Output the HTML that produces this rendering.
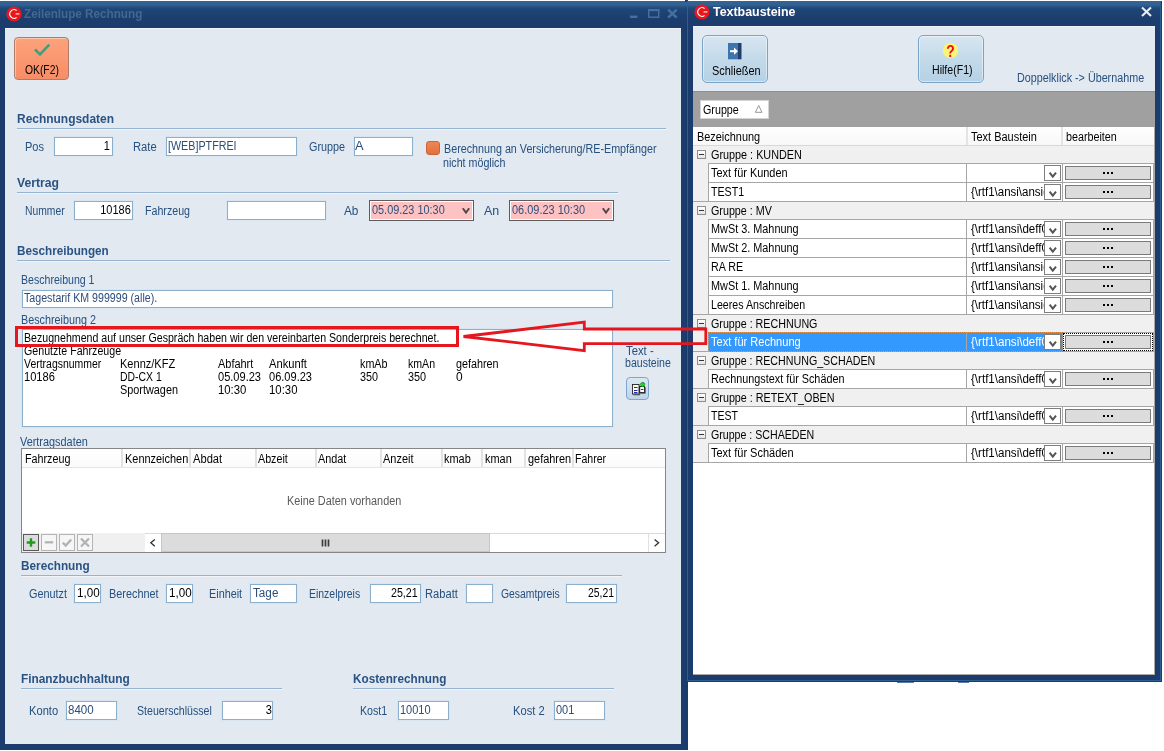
<!DOCTYPE html>
<html lang="de"><head><meta charset="utf-8"><title>Zeilenlupe Rechnung</title>
<style>
html,body{margin:0;padding:0}
body{width:1164px;height:751px;position:relative;overflow:hidden;background:#fff;font-family:"Liberation Sans",sans-serif;font-size:11px;line-height:13px}
#root{position:absolute;left:0;top:0;width:1164px;height:751px;will-change:transform}
.a{position:absolute}
.t{position:absolute;white-space:pre;line-height:14px;font-size:12.5px;display:inline-block;transform-origin:0 0}
.b{font-weight:bold;font-size:12px;line-height:14px}
.r{transform-origin:100% 0}
.inp{border:1px solid #8bb0cd;background:#fff;box-sizing:border-box;box-shadow:0 0 0 1px rgba(214,227,239,.7)}
.clip{overflow:hidden}
</style></head>
<body>
<div id="root">
<div class="a " style="left:0px;top:1px;width:688px;height:749px;background:#1b3c6c"></div>
<div class="a " style="left:0px;top:1px;width:688px;height:22px;background:linear-gradient(#346497 0,#316192 4px,#275183 6px,#1f4677 8px,#1d4172 13px,#1b3c6c 22px)"></div>
<div class="a " style="left:5px;top:28px;width:676px;height:716px;background:#e2e9f1;border-top:1px solid #f1f5f9;box-sizing:border-box"></div>
<div class="a " style="left:687px;top:1px;width:475px;height:681px;background:#1b3c6c"></div>
<div class="a " style="left:685px;top:0px;width:3px;height:2px;background:#1b3c6c"></div>
<div class="a " style="left:687px;top:1px;width:475px;height:22px;background:linear-gradient(#346497 0,#316192 4px,#275183 6px,#1f4677 8px,#1d4172 13px,#1b3c6c 22px)"></div>
<div class="a " style="left:686px;top:24px;width:1px;height:726px;background:#16386a"></div>
<div class="a " style="left:687px;top:3px;width:1px;height:678px;background:#2e5e92"></div>
<div class="a " style="left:1160px;top:3px;width:1px;height:678px;background:#2e5e92"></div>
<div class="a " style="left:687px;top:680px;width:474px;height:1px;background:#2e5e92"></div>
<div class="a " style="left:1161px;top:1px;width:1px;height:681px;background:#153d72"></div>
<div class="a " style="left:686px;top:681px;width:476px;height:1px;background:#153d72"></div>
<div class="a " style="left:693px;top:26px;width:462px;height:649px;background:#fff"></div>
<div class="a " style="left:693px;top:26px;width:462px;height:65px;background:#e2e9f1;border-top:1px solid #edf2f7;box-sizing:border-box"></div>
<div class="a " style="left:693px;top:91px;width:462px;height:36px;background:#a0a0a0;border-top:1px solid #8c9199;box-sizing:border-box"></div>
<svg class="a" style="left:4.5px;top:4.5px" width="18" height="18" viewBox="-9 -9 18 18"><circle r="7.6" fill="#e9171c"/><path d="M2.6,-3.5A4.3,4.3 0 1 0 2.6,3.5" fill="none" stroke="#fff" stroke-width="1.15"/><path d="M1.6,-0.1H5.4" stroke="#fff" stroke-width="1.1"/></svg>
<svg class="a" style="left:692.5px;top:2.8000000000000007px" width="18" height="18" viewBox="-9 -9 18 18"><circle r="7.6" fill="#e9171c"/><path d="M2.6,-3.5A4.3,4.3 0 1 0 2.6,3.5" fill="none" stroke="#fff" stroke-width="1.15"/><path d="M1.6,-0.1H5.4" stroke="#fff" stroke-width="1.1"/></svg>
<span class="t b" style="top:7px;color:#44688f;left:24.4px;transform:scaleX(0.975);">Zeilenlupe Rechnung</span>
<svg class="a" style="left:625px;top:5px" width="58" height="18" viewBox="625 5 58 18"><path d="M630,16.8h7.4" stroke="#4470a0" stroke-width="2.4"/><rect x="648.7" y="10.4" width="10" height="6.8" fill="none" stroke="#4470a0" stroke-width="1.5"/><path d="M648,10h11.4" stroke="#4470a0" stroke-width="2"/><path d="M668.2,9.6l8.4,8M676.6,9.6l-8.4,8" stroke="#4470a0" stroke-width="2.6"/></svg>
<span class="t b" style="top:5px;color:#fff;left:713.0px;transform:scaleX(1.034);">Textbausteine</span>
<svg class="a" style="left:1138px;top:4px" width="18" height="16" viewBox="1138 4 18 16"><path d="M1142,7.5l9,8.5M1151,7.5l-9,8.5" stroke="#e9eef5" stroke-width="2.1"/></svg>
<div class="a " style="left:14px;top:37px;width:55px;height:43px;border:1px solid #ad7d6a;border-radius:4px;background:linear-gradient(#fca27c,#fa9871 50%,#f78d66);box-sizing:border-box;box-shadow:inset 1px 1px 0 rgba(255,255,255,.4)"></div>
<svg class="a" style="left:30px;top:40px" width="24" height="20" viewBox="30 40 24 20"><path d="M35,49.5l5,5L49.3,44.6" fill="none" stroke="#4a9a7c" stroke-width="2.6"/></svg>
<span class="t" style="top:63px;color:#000;left:25.1px;transform:scaleX(0.826);">OK(F2)</span>
<span class="t b" style="top:112px;color:#2a5384;left:16.7px;transform:scaleX(0.996);">Rechnungsdaten</span>
<div class="a " style="left:17px;top:128px;width:649px;height:1px;background:#96b4d1"></div>
<div class="a " style="left:17px;top:129px;width:649px;height:1px;background:#f1f5f9"></div>
<span class="t b" style="top:176px;color:#2a5384;left:16.7px;transform:scaleX(1.016);">Vertrag</span>
<div class="a " style="left:17px;top:192px;width:601px;height:1px;background:#96b4d1"></div>
<div class="a " style="left:17px;top:193px;width:601px;height:1px;background:#f1f5f9"></div>
<span class="t b" style="top:244px;color:#2a5384;left:16.7px;transform:scaleX(0.976);">Beschreibungen</span>
<div class="a " style="left:17px;top:260px;width:653px;height:1px;background:#96b4d1"></div>
<div class="a " style="left:17px;top:261px;width:653px;height:1px;background:#f1f5f9"></div>
<span class="t b" style="top:559px;color:#2a5384;left:20.9px;transform:scaleX(0.981);">Berechnung</span>
<div class="a " style="left:21px;top:575px;width:601px;height:1px;background:#96b4d1"></div>
<div class="a " style="left:21px;top:576px;width:601px;height:1px;background:#f1f5f9"></div>
<span class="t b" style="top:672px;color:#2a5384;left:20.5px;transform:scaleX(0.988);">Finanzbuchhaltung</span>
<div class="a " style="left:21px;top:688px;width:261px;height:1px;background:#96b4d1"></div>
<div class="a " style="left:21px;top:689px;width:261px;height:1px;background:#f1f5f9"></div>
<span class="t b" style="top:672px;color:#2a5384;left:352.5px;transform:scaleX(0.979);">Kostenrechnung</span>
<div class="a " style="left:353px;top:688px;width:261px;height:1px;background:#96b4d1"></div>
<div class="a " style="left:353px;top:689px;width:261px;height:1px;background:#f1f5f9"></div>
<span class="t" style="top:140px;color:#25507f;left:24.9px;transform:scaleX(0.883);">Pos</span>
<div class="a inp" style="left:54px;top:137px;width:59px;height:19px;"></div>
<span class="t r" style="top:139px;color:#000;right:1054.4px;transform:scaleX(0.880);">1</span>
<span class="t" style="top:140px;color:#25507f;left:132.9px;transform:scaleX(0.899);">Rate</span>
<div class="a inp" style="left:166px;top:137px;width:131px;height:19px;"></div>
<span class="t" style="top:139px;color:#2d4d78;left:168.0px;transform:scaleX(0.859);">[WEB]PTFREI</span>
<span class="t" style="top:140px;color:#25507f;left:308.6px;transform:scaleX(0.863);">Gruppe</span>
<div class="a inp" style="left:354px;top:137px;width:59px;height:19px;"></div>
<span class="t" style="top:139px;color:#2d4d78;left:355.2px;transform:scaleX(1.023);">A</span>
<div class="a " style="left:426px;top:141px;width:14px;height:14px;border:1px solid #c8663a;border-radius:3px;background:linear-gradient(#ee8656,#e46f3c);box-sizing:border-box"></div>
<span class="t" style="top:142px;color:#25507f;left:444.0px;transform:scaleX(0.859);">Berechnung an Versicherung/RE-Empfänger</span>
<span class="t" style="top:156px;color:#25507f;left:443.2px;transform:scaleX(0.855);">nicht möglich</span>
<span class="t" style="top:204px;color:#25507f;left:24.9px;transform:scaleX(0.827);">Nummer</span>
<div class="a inp" style="left:74px;top:201px;width:59px;height:19px;"></div>
<span class="t r" style="top:203px;color:#000;right:1033.1px;transform:scaleX(0.880);">10186</span>
<span class="t" style="top:204px;color:#25507f;left:144.9px;transform:scaleX(0.852);">Fahrzeug</span>
<div class="a inp" style="left:227px;top:201px;width:99px;height:19px;"></div>
<span class="t" style="top:204px;color:#25507f;left:344.2px;transform:scaleX(0.942);">Ab</span>
<div class="a " style="left:369px;top:200px;width:105px;height:21px;border:1px solid #5c5c5c;background:#ffc2c2;box-sizing:border-box;box-shadow:inset 0 0 0 1px #fff"></div>
<span class="t" style="top:203px;color:#2e5180;left:371.9px;transform:scaleX(0.872);">05.09.23 10:30</span>
<svg class="a" style="left:459.5px;top:205px" width="12" height="12" viewBox="0 0 12 12"><path d="M2.8,3.3l3.2,4.3l3.2,-4.3" fill="none" stroke="#4a4a4a" stroke-width="1.9"/></svg>
<span class="t" style="top:204px;color:#25507f;left:483.9px;transform:scaleX(0.993);">An</span>
<div class="a " style="left:509px;top:200px;width:105px;height:21px;border:1px solid #5c5c5c;background:#ffc2c2;box-sizing:border-box;box-shadow:inset 0 0 0 1px #fff"></div>
<span class="t" style="top:203px;color:#2e5180;left:511.5px;transform:scaleX(0.876);">06.09.23 10:30</span>
<svg class="a" style="left:599.5px;top:205px" width="12" height="12" viewBox="0 0 12 12"><path d="M2.8,3.3l3.2,4.3l3.2,-4.3" fill="none" stroke="#4a4a4a" stroke-width="1.9"/></svg>
<span class="t" style="top:273px;color:#25507f;left:20.9px;transform:scaleX(0.846);">Beschreibung 1</span>
<div class="a inp" style="left:22px;top:290px;width:591px;height:18px;"></div>
<span class="t" style="top:291px;color:#2d4d78;left:24.0px;transform:scaleX(0.852);">Tagestarif KM 999999 (alle).</span>
<span class="t" style="top:313px;color:#25507f;left:20.9px;transform:scaleX(0.863);">Beschreibung 2</span>
<div class="a inp" style="left:22px;top:329px;width:591px;height:98px;"></div>
<span class="t" style="top:331px;color:#000;left:24.0px;transform:scaleX(0.849);">Bezugnehmend auf unser Gespräch haben wir den vereinbarten Sonderpreis berechnet.</span>
<span class="t" style="top:344px;color:#000;left:23.5px;transform:scaleX(0.852);">Genutzte Fahrzeuge</span>
<span class="t" style="top:357px;color:#000;left:23.5px;transform:scaleX(0.836);">Vertragsnummer</span>
<span class="t" style="top:357px;color:#000;left:119.6px;transform:scaleX(0.883);">Kennz/KFZ</span>
<span class="t" style="top:357px;color:#000;left:218.1px;transform:scaleX(0.876);">Abfahrt</span>
<span class="t" style="top:357px;color:#000;left:269.1px;transform:scaleX(0.895);">Ankunft</span>
<span class="t" style="top:357px;color:#000;left:359.6px;transform:scaleX(0.860);">kmAb</span>
<span class="t" style="top:357px;color:#000;left:408.3px;transform:scaleX(0.847);">kmAn</span>
<span class="t" style="top:357px;color:#000;left:456.0px;transform:scaleX(0.863);">gefahren</span>
<span class="t" style="top:370px;color:#000;left:23.5px;transform:scaleX(0.890);">10186</span>
<span class="t" style="top:370px;color:#000;left:119.6px;transform:scaleX(0.835);">DD-CX 1</span>
<span class="t" style="top:370px;color:#000;left:218.1px;transform:scaleX(0.884);">05.09.23</span>
<span class="t" style="top:370px;color:#000;left:269.1px;transform:scaleX(0.884);">06.09.23</span>
<span class="t" style="top:370px;color:#000;left:359.6px;transform:scaleX(0.863);">350</span>
<span class="t" style="top:370px;color:#000;left:408.3px;transform:scaleX(0.868);">350</span>
<span class="t" style="top:370px;color:#000;left:455.9px;transform:scaleX(0.954);">0</span>
<span class="t" style="top:383px;color:#000;left:119.6px;transform:scaleX(0.869);">Sportwagen</span>
<span class="t" style="top:383px;color:#000;left:218.1px;transform:scaleX(0.907);">10:30</span>
<span class="t" style="top:383px;color:#000;left:269.1px;transform:scaleX(0.910);">10:30</span>
<span class="t" style="top:344px;color:#25507f;left:625.6px;transform:scaleX(0.905);">Text -</span>
<span class="t" style="top:356px;color:#25507f;left:625.3px;transform:scaleX(0.846);">bausteine</span>
<div class="a " style="left:626px;top:377px;width:23px;height:23px;border:1px solid #7fa5cf;border-radius:4px;background:linear-gradient(#dbe7f3,#bfd4e9);box-sizing:border-box"></div>
<svg class="a" style="left:626px;top:377px" width="23" height="23" viewBox="626 377 23 23"><rect x="639.5" y="386.5" width="5" height="6" fill="#fff" stroke="#222" stroke-width=".9"/><path d="M640.5,393.3h4.8v-6" fill="none" stroke="#222" stroke-width=".7"/><path d="M641,389.5h2.5" stroke="#2233aa" stroke-width="1"/><rect x="632.5" y="384.5" width="6.5" height="9.5" fill="#fff" stroke="#222" stroke-width=".9"/><path d="M633.5,394.8h6.3v-9" fill="none" stroke="#222" stroke-width=".7"/><path d="M634,387.5h3.5M634,390.5h3.5M634,392.6h3.5" stroke="#1a2bb0" stroke-width="1.2"/><path d="M633.5,386h1M637,389h1M633.5,391.6h1" stroke="#e8e000" stroke-width="1"/><path d="M642.7,382v4.8M640.3,384.4h4.8" stroke="#0a7a0a" stroke-width="2.2"/><path d="M642.7,382.4v4M640.7,384.4h4" stroke="#22dd22" stroke-width="1.4"/></svg>
<span class="t" style="top:435px;color:#25507f;left:20.1px;transform:scaleX(0.871);">Vertragsdaten</span>
<div class="a " style="left:21px;top:448px;width:645px;height:105px;border:1px solid #868686;background:#fff;box-sizing:border-box"></div>
<div class="a " style="left:22px;top:449px;width:643px;height:19px;background:linear-gradient(#fff,#fbfbfb);border-bottom:1px solid #e4e4e4;box-sizing:border-box"></div>
<div class="a " style="left:121px;top:449px;width:2px;height:18px;background:#e2e2e2"></div>
<div class="a " style="left:189px;top:449px;width:2px;height:18px;background:#e2e2e2"></div>
<div class="a " style="left:255px;top:449px;width:2px;height:18px;background:#e2e2e2"></div>
<div class="a " style="left:315px;top:449px;width:2px;height:18px;background:#e2e2e2"></div>
<div class="a " style="left:380px;top:449px;width:2px;height:18px;background:#e2e2e2"></div>
<div class="a " style="left:441px;top:449px;width:2px;height:18px;background:#e2e2e2"></div>
<div class="a " style="left:481px;top:449px;width:2px;height:18px;background:#e2e2e2"></div>
<div class="a " style="left:524px;top:449px;width:2px;height:18px;background:#e2e2e2"></div>
<div class="a " style="left:572px;top:449px;width:2px;height:18px;background:#e2e2e2"></div>
<span class="t" style="top:452px;color:#000;left:24.5px;transform:scaleX(0.859);">Fahrzeug</span>
<span class="t" style="top:452px;color:#000;left:124.7px;transform:scaleX(0.875);">Kennzeichen</span>
<span class="t" style="top:452px;color:#000;left:193.3px;transform:scaleX(0.892);">Abdat</span>
<span class="t" style="top:452px;color:#000;left:258.3px;transform:scaleX(0.857);">Abzeit</span>
<span class="t" style="top:452px;color:#000;left:318.3px;transform:scaleX(0.866);">Andat</span>
<span class="t" style="top:452px;color:#000;left:383.1px;transform:scaleX(0.878);">Anzeit</span>
<span class="t" style="top:452px;color:#000;left:443.9px;transform:scaleX(0.874);">kmab</span>
<span class="t" style="top:452px;color:#000;left:484.8px;transform:scaleX(0.874);">kman</span>
<span class="t" style="top:452px;color:#000;left:527.7px;transform:scaleX(0.873);">gefahren</span>
<span class="t" style="top:452px;color:#000;left:575.3px;transform:scaleX(0.844);">Fahrer</span>
<span class="t" style="top:494px;color:#5a5a5a;left:286.8px;transform:scaleX(0.870);">Keine Daten vorhanden</span>
<div class="a " style="left:22px;top:533px;width:123px;height:19px;background:#f0f0f0"></div>
<div class="a " style="left:23px;top:534px;width:16px;height:17px;border:1px solid #5a5a5a;background:#dcdcdc;box-sizing:border-box"><svg width="14" height="15" viewBox="0 0 14 15" style="display:block"><path d="M7,3.2v8.6M2.7,7.5h8.6" stroke="#1f9a1f" stroke-width="2.4"/></svg></div>
<div class="a " style="left:41px;top:534px;width:16px;height:17px;border:1px solid #b4b4b4;background:#f6f6f6;box-sizing:border-box"><svg width="14" height="15" viewBox="0 0 14 15" style="display:block"><path d="M2.8,7.3h8.4" stroke="#b2b2b2" stroke-width="2.2"/></svg></div>
<div class="a " style="left:59px;top:534px;width:16px;height:17px;border:1px solid #b4b4b4;background:#f6f6f6;box-sizing:border-box"><svg width="14" height="15" viewBox="0 0 14 15" style="display:block"><path d="M2.8,7.6l2.9,3L11.2,4.6" fill="none" stroke="#b2b2b2" stroke-width="2.3"/></svg></div>
<div class="a " style="left:77px;top:534px;width:16px;height:17px;border:1px solid #b4b4b4;background:#f6f6f6;box-sizing:border-box"><svg width="14" height="15" viewBox="0 0 14 15" style="display:block"><path d="M3,3.4l8,8.2M11,3.4l-8,8.2" stroke="#b2b2b2" stroke-width="2.2"/></svg></div>
<div class="a " style="left:145px;top:533px;width:520px;height:19px;background:#fff;border-top:1px solid #dadada;box-sizing:border-box"></div>
<div class="a " style="left:161px;top:533px;width:329px;height:19px;background:#dcdcdc;border:1px solid #c6c6c6;box-sizing:border-box"></div>
<svg class="a" style="left:145px;top:533px" width="520" height="19" viewBox="145 533 520 19"><path d="M154.8,539.4l-4,3.4l4,3.4" fill="none" stroke="#2e2e2e" stroke-width="1.3"/><path d="M654.6,539.4l4,3.4l-4,3.4" fill="none" stroke="#2e2e2e" stroke-width="1.3"/><path d="M322.5,539.5v7M325.5,539.5v7M328.5,539.5v7" stroke="#3c3c3c" stroke-width="1.7"/></svg>
<div class="a " style="left:648px;top:534px;width:1px;height:18px;background:#e0e0e0"></div>
<span class="t" style="top:587px;color:#25507f;left:28.9px;transform:scaleX(0.870);">Genutzt</span>
<div class="a inp" style="left:74px;top:584px;width:27px;height:19px;"></div>
<span class="t" style="top:586px;color:#000;left:77.1px;transform:scaleX(0.932);">1,00</span>
<span class="t" style="top:587px;color:#25507f;left:109.2px;transform:scaleX(0.869);">Berechnet</span>
<div class="a inp" style="left:166px;top:584px;width:27px;height:19px;"></div>
<span class="t" style="top:586px;color:#000;left:169.1px;transform:scaleX(0.928);">1,00</span>
<span class="t" style="top:587px;color:#25507f;left:208.8px;transform:scaleX(0.866);">Einheit</span>
<div class="a inp" style="left:250px;top:584px;width:47px;height:19px;"></div>
<span class="t" style="top:586px;color:#2d4d78;left:252.6px;transform:scaleX(0.937);">Tage</span>
<span class="t" style="top:587px;color:#25507f;left:308.7px;transform:scaleX(0.837);">Einzelpreis</span>
<div class="a inp" style="left:370px;top:584px;width:51px;height:19px;"></div>
<span class="t" style="top:586px;color:#000;left:391.3px;transform:scaleX(0.853);">25,21</span>
<span class="t" style="top:587px;color:#25507f;left:424.6px;transform:scaleX(0.891);">Rabatt</span>
<div class="a inp" style="left:466px;top:584px;width:27px;height:19px;"></div>
<span class="t" style="top:587px;color:#25507f;left:500.8px;transform:scaleX(0.830);">Gesamtpreis</span>
<div class="a inp" style="left:566px;top:584px;width:51px;height:19px;"></div>
<span class="t" style="top:586px;color:#000;left:587.6px;transform:scaleX(0.833);">25,21</span>
<span class="t" style="top:704px;color:#25507f;left:28.5px;transform:scaleX(0.892);">Konto</span>
<div class="a inp" style="left:66px;top:701px;width:51px;height:19px;"></div>
<span class="t" style="top:703px;color:#2d4d78;left:67.9px;transform:scaleX(0.924);">8400</span>
<span class="t" style="top:704px;color:#25507f;left:136.6px;transform:scaleX(0.848);">Steuerschlüssel</span>
<div class="a inp" style="left:222px;top:701px;width:51px;height:19px;"></div>
<span class="t r" style="top:703px;color:#000;right:892.4px;transform:scaleX(0.880);">3</span>
<span class="t" style="top:704px;color:#25507f;left:360.3px;transform:scaleX(0.853);">Kost1</span>
<div class="a inp" style="left:398px;top:701px;width:51px;height:19px;"></div>
<span class="t" style="top:703px;color:#2d4d78;left:400.3px;transform:scaleX(0.881);">10010</span>
<span class="t" style="top:704px;color:#25507f;left:512.5px;transform:scaleX(0.893);">Kost 2</span>
<div class="a inp" style="left:554px;top:701px;width:51px;height:19px;"></div>
<span class="t" style="top:703px;color:#2d4d78;left:555.8px;transform:scaleX(0.878);">001</span>
<div class="a " style="left:702px;top:35px;width:66px;height:48px;border:1px solid #79a4c9;border-radius:5px;background:linear-gradient(#d7e6f1,#c5dbea 45%,#b5d1e5);box-sizing:border-box;box-shadow:inset 0 0 0 1px rgba(255,255,255,.45)"></div>
<svg class="a" style="left:728px;top:43px" width="14" height="17" viewBox="0 0 14 17"><rect x="0" y="0" width="9.5" height="16.3" fill="#3e74ae"/><rect x="9.5" y="0" width="4" height="16.3" fill="#213f68"/><path d="M2,8.2h5.5" stroke="#fff" stroke-width="2"/><path d="M6,4.6l4,3.6l-4,3.6z" fill="#fff"/></svg>
<span class="t" style="top:64px;color:#000;left:711.6px;transform:scaleX(0.873);">Schließen</span>
<div class="a " style="left:918px;top:35px;width:66px;height:48px;border:1px solid #79a4c9;border-radius:5px;background:linear-gradient(#d7e6f1,#c5dbea 45%,#b5d1e5);box-sizing:border-box;box-shadow:inset 0 0 0 1px rgba(255,255,255,.45)"></div>
<svg class="a" style="left:942px;top:42px" width="17" height="17" viewBox="-8.5 -8.5 17 17"><circle r="7.7" fill="#fbf577"/><text x="0" y="6.2" text-anchor="middle" transform="scale(.82,1)" font-family="Liberation Sans,sans-serif" font-weight="bold" font-size="17" fill="#ea1018">?</text></svg>
<span class="t" style="top:63px;color:#000;left:931.7px;transform:scaleX(0.847);">Hilfe(F1)</span>
<span class="t" style="top:71px;color:#25507f;left:1016.6px;transform:scaleX(0.861);">Doppelklick -&gt; Übernahme</span>
<div class="a " style="left:700px;top:100px;width:69px;height:19px;background:#fff;border:1px solid #d4d4d4;box-sizing:border-box"></div>
<span class="t" style="top:103px;color:#000;left:702.8px;transform:scaleX(0.858);">Gruppe</span>
<svg class="a" style="left:754px;top:104px" width="10" height="10" viewBox="0 0 10 10"><path d="M4.7,1.5l3.3,6.8h-6.6z" fill="#fff" stroke="#8c8c8c" stroke-width=".9"/></svg>
<div class="a " style="left:693px;top:127px;width:461px;height:19px;background:linear-gradient(#fff,#f7f7f7);border-bottom:1px solid #d8d8d8;box-sizing:border-box"></div>
<div class="a " style="left:966px;top:127px;width:2px;height:18px;background:#e4e4e4"></div>
<div class="a " style="left:1061px;top:127px;width:2px;height:18px;background:#e4e4e4"></div>
<span class="t" style="top:130px;color:#000;left:697.0px;transform:scaleX(0.873);">Bezeichnung</span>
<span class="t" style="top:130px;color:#000;left:971.1px;transform:scaleX(0.878);">Text Baustein</span>
<span class="t" style="top:130px;color:#000;left:1066.0px;transform:scaleX(0.860);">bearbeiten</span>
<div class="a " style="left:1154px;top:127px;width:1px;height:548px;background:#a9a9a9"></div>
<div class="a " style="left:693px;top:674px;width:462px;height:1px;background:#a9a9a9"></div>
<div class="a " style="left:693px;top:146px;width:461px;height:18px;background:#f0f0f0"></div>
<div class="a " style="left:697px;top:150px;width:9px;height:9px;border:1px solid #8e8e8e;background:linear-gradient(#fff,#e4e4e4);box-sizing:border-box"><div style="position:absolute;left:1px;top:3px;width:5px;height:1px;background:#333"></div></div>
<span class="t" style="top:148px;color:#000;left:710.6px;transform:scaleX(0.866);">Gruppe : KUNDEN</span>
<div class="a " style="left:693px;top:164px;width:16px;height:19px;background:#f0f0f0"></div>
<div class="a " style="left:708px;top:163px;width:256px;height:20px;border:1px solid #a6a6a6;background:#fff;box-sizing:border-box"></div>
<div class="a " style="left:963px;top:163px;width:100px;height:20px;border:1px solid #a6a6a6;border-left:0;background:#fff;box-sizing:border-box"></div>
<div class="a " style="left:966px;top:164px;width:1px;height:18px;background:#a6a6a6"></div>
<div class="a " style="left:1062px;top:163px;width:92px;height:20px;border:1px solid #a6a6a6;background:#fff;box-sizing:border-box"></div>
<span class="t" style="top:166px;color:#000;left:711.4px;transform:scaleX(0.875);">Text für Kunden</span>
<div class="a " style="left:1044px;top:165px;width:17px;height:16px;border:1px solid #7e7e7e;background:#fff;box-sizing:border-box"><svg width="15" height="14" viewBox="0 0 15 14" style="display:block"><path d="M4.6,6.6l3.2,4l3.2,-4" fill="none" stroke="#555" stroke-width="2"/></svg></div>
<div class="a " style="left:1065px;top:166px;width:86px;height:14px;border:1px solid #7a7a7a;background:#dcdcdc;box-sizing:border-box"><div style="position:absolute;left:0;right:0;top:5px;text-align:center;line-height:0;font-size:0"><span style="display:inline-block;width:2px;height:2px;background:#000;margin:0 1px"></span><span style="display:inline-block;width:2px;height:2px;background:#000;margin:0 1px"></span><span style="display:inline-block;width:2px;height:2px;background:#000;margin:0 1px"></span></div></div>
<div class="a " style="left:693px;top:183px;width:16px;height:19px;background:#f0f0f0"></div>
<div class="a " style="left:708px;top:182px;width:256px;height:20px;border:1px solid #a6a6a6;background:#fff;box-sizing:border-box"></div>
<div class="a " style="left:963px;top:182px;width:100px;height:20px;border:1px solid #a6a6a6;border-left:0;background:#fff;box-sizing:border-box"></div>
<div class="a " style="left:966px;top:183px;width:1px;height:18px;background:#a6a6a6"></div>
<div class="a " style="left:1062px;top:182px;width:92px;height:20px;border:1px solid #a6a6a6;background:#fff;box-sizing:border-box"></div>
<span class="t" style="top:185px;color:#000;left:711.4px;transform:scaleX(0.853);">TEST1</span>
<span class="t" style="top:185px;color:#000;left:970.7px;transform:scaleX(0.918);width:79.3px;overflow:hidden;">{\rtf1\ansi\ansicpg1252</span>
<div class="a " style="left:1044px;top:184px;width:17px;height:16px;border:1px solid #7e7e7e;background:#fff;box-sizing:border-box"><svg width="15" height="14" viewBox="0 0 15 14" style="display:block"><path d="M4.6,6.6l3.2,4l3.2,-4" fill="none" stroke="#555" stroke-width="2"/></svg></div>
<div class="a " style="left:1065px;top:185px;width:86px;height:14px;border:1px solid #7a7a7a;background:#dcdcdc;box-sizing:border-box"><div style="position:absolute;left:0;right:0;top:5px;text-align:center;line-height:0;font-size:0"><span style="display:inline-block;width:2px;height:2px;background:#000;margin:0 1px"></span><span style="display:inline-block;width:2px;height:2px;background:#000;margin:0 1px"></span><span style="display:inline-block;width:2px;height:2px;background:#000;margin:0 1px"></span></div></div>
<div class="a " style="left:693px;top:202px;width:461px;height:18px;background:#f0f0f0"></div>
<div class="a " style="left:697px;top:206px;width:9px;height:9px;border:1px solid #8e8e8e;background:linear-gradient(#fff,#e4e4e4);box-sizing:border-box"><div style="position:absolute;left:1px;top:3px;width:5px;height:1px;background:#333"></div></div>
<span class="t" style="top:204px;color:#000;left:710.6px;transform:scaleX(0.859);">Gruppe : MV</span>
<div class="a " style="left:693px;top:201px;width:16px;height:1px;background:#a6a6a6"></div>
<div class="a " style="left:693px;top:220px;width:16px;height:19px;background:#f0f0f0"></div>
<div class="a " style="left:708px;top:219px;width:256px;height:20px;border:1px solid #a6a6a6;background:#fff;box-sizing:border-box"></div>
<div class="a " style="left:963px;top:219px;width:100px;height:20px;border:1px solid #a6a6a6;border-left:0;background:#fff;box-sizing:border-box"></div>
<div class="a " style="left:966px;top:220px;width:1px;height:18px;background:#a6a6a6"></div>
<div class="a " style="left:1062px;top:219px;width:92px;height:20px;border:1px solid #a6a6a6;background:#fff;box-sizing:border-box"></div>
<span class="t" style="top:222px;color:#000;left:711.4px;transform:scaleX(0.869);">MwSt 3. Mahnung</span>
<span class="t" style="top:222px;color:#000;left:970.7px;transform:scaleX(0.925);width:78.7px;overflow:hidden;">{\rtf1\ansi\deff0</span>
<div class="a " style="left:1044px;top:221px;width:17px;height:16px;border:1px solid #7e7e7e;background:#fff;box-sizing:border-box"><svg width="15" height="14" viewBox="0 0 15 14" style="display:block"><path d="M4.6,6.6l3.2,4l3.2,-4" fill="none" stroke="#555" stroke-width="2"/></svg></div>
<div class="a " style="left:1065px;top:222px;width:86px;height:14px;border:1px solid #7a7a7a;background:#dcdcdc;box-sizing:border-box"><div style="position:absolute;left:0;right:0;top:5px;text-align:center;line-height:0;font-size:0"><span style="display:inline-block;width:2px;height:2px;background:#000;margin:0 1px"></span><span style="display:inline-block;width:2px;height:2px;background:#000;margin:0 1px"></span><span style="display:inline-block;width:2px;height:2px;background:#000;margin:0 1px"></span></div></div>
<div class="a " style="left:693px;top:239px;width:16px;height:19px;background:#f0f0f0"></div>
<div class="a " style="left:708px;top:238px;width:256px;height:20px;border:1px solid #a6a6a6;background:#fff;box-sizing:border-box"></div>
<div class="a " style="left:963px;top:238px;width:100px;height:20px;border:1px solid #a6a6a6;border-left:0;background:#fff;box-sizing:border-box"></div>
<div class="a " style="left:966px;top:239px;width:1px;height:18px;background:#a6a6a6"></div>
<div class="a " style="left:1062px;top:238px;width:92px;height:20px;border:1px solid #a6a6a6;background:#fff;box-sizing:border-box"></div>
<span class="t" style="top:241px;color:#000;left:711.4px;transform:scaleX(0.869);">MwSt 2. Mahnung</span>
<span class="t" style="top:241px;color:#000;left:970.7px;transform:scaleX(0.925);width:78.7px;overflow:hidden;">{\rtf1\ansi\deff0</span>
<div class="a " style="left:1044px;top:240px;width:17px;height:16px;border:1px solid #7e7e7e;background:#fff;box-sizing:border-box"><svg width="15" height="14" viewBox="0 0 15 14" style="display:block"><path d="M4.6,6.6l3.2,4l3.2,-4" fill="none" stroke="#555" stroke-width="2"/></svg></div>
<div class="a " style="left:1065px;top:241px;width:86px;height:14px;border:1px solid #7a7a7a;background:#dcdcdc;box-sizing:border-box"><div style="position:absolute;left:0;right:0;top:5px;text-align:center;line-height:0;font-size:0"><span style="display:inline-block;width:2px;height:2px;background:#000;margin:0 1px"></span><span style="display:inline-block;width:2px;height:2px;background:#000;margin:0 1px"></span><span style="display:inline-block;width:2px;height:2px;background:#000;margin:0 1px"></span></div></div>
<div class="a " style="left:693px;top:258px;width:16px;height:19px;background:#f0f0f0"></div>
<div class="a " style="left:708px;top:257px;width:256px;height:20px;border:1px solid #a6a6a6;background:#fff;box-sizing:border-box"></div>
<div class="a " style="left:963px;top:257px;width:100px;height:20px;border:1px solid #a6a6a6;border-left:0;background:#fff;box-sizing:border-box"></div>
<div class="a " style="left:966px;top:258px;width:1px;height:18px;background:#a6a6a6"></div>
<div class="a " style="left:1062px;top:257px;width:92px;height:20px;border:1px solid #a6a6a6;background:#fff;box-sizing:border-box"></div>
<span class="t" style="top:260px;color:#000;left:711.4px;transform:scaleX(0.858);">RA RE</span>
<span class="t" style="top:260px;color:#000;left:970.7px;transform:scaleX(0.918);width:79.3px;overflow:hidden;">{\rtf1\ansi\ansicpg1252</span>
<div class="a " style="left:1044px;top:259px;width:17px;height:16px;border:1px solid #7e7e7e;background:#fff;box-sizing:border-box"><svg width="15" height="14" viewBox="0 0 15 14" style="display:block"><path d="M4.6,6.6l3.2,4l3.2,-4" fill="none" stroke="#555" stroke-width="2"/></svg></div>
<div class="a " style="left:1065px;top:260px;width:86px;height:14px;border:1px solid #7a7a7a;background:#dcdcdc;box-sizing:border-box"><div style="position:absolute;left:0;right:0;top:5px;text-align:center;line-height:0;font-size:0"><span style="display:inline-block;width:2px;height:2px;background:#000;margin:0 1px"></span><span style="display:inline-block;width:2px;height:2px;background:#000;margin:0 1px"></span><span style="display:inline-block;width:2px;height:2px;background:#000;margin:0 1px"></span></div></div>
<div class="a " style="left:693px;top:277px;width:16px;height:19px;background:#f0f0f0"></div>
<div class="a " style="left:708px;top:276px;width:256px;height:20px;border:1px solid #a6a6a6;background:#fff;box-sizing:border-box"></div>
<div class="a " style="left:963px;top:276px;width:100px;height:20px;border:1px solid #a6a6a6;border-left:0;background:#fff;box-sizing:border-box"></div>
<div class="a " style="left:966px;top:277px;width:1px;height:18px;background:#a6a6a6"></div>
<div class="a " style="left:1062px;top:276px;width:92px;height:20px;border:1px solid #a6a6a6;background:#fff;box-sizing:border-box"></div>
<span class="t" style="top:279px;color:#000;left:711.4px;transform:scaleX(0.869);">MwSt 1. Mahnung</span>
<span class="t" style="top:279px;color:#000;left:970.7px;transform:scaleX(0.918);width:79.3px;overflow:hidden;">{\rtf1\ansi\ansicpg1252</span>
<div class="a " style="left:1044px;top:278px;width:17px;height:16px;border:1px solid #7e7e7e;background:#fff;box-sizing:border-box"><svg width="15" height="14" viewBox="0 0 15 14" style="display:block"><path d="M4.6,6.6l3.2,4l3.2,-4" fill="none" stroke="#555" stroke-width="2"/></svg></div>
<div class="a " style="left:1065px;top:279px;width:86px;height:14px;border:1px solid #7a7a7a;background:#dcdcdc;box-sizing:border-box"><div style="position:absolute;left:0;right:0;top:5px;text-align:center;line-height:0;font-size:0"><span style="display:inline-block;width:2px;height:2px;background:#000;margin:0 1px"></span><span style="display:inline-block;width:2px;height:2px;background:#000;margin:0 1px"></span><span style="display:inline-block;width:2px;height:2px;background:#000;margin:0 1px"></span></div></div>
<div class="a " style="left:693px;top:296px;width:16px;height:19px;background:#f0f0f0"></div>
<div class="a " style="left:708px;top:295px;width:256px;height:20px;border:1px solid #a6a6a6;background:#fff;box-sizing:border-box"></div>
<div class="a " style="left:963px;top:295px;width:100px;height:20px;border:1px solid #a6a6a6;border-left:0;background:#fff;box-sizing:border-box"></div>
<div class="a " style="left:966px;top:296px;width:1px;height:18px;background:#a6a6a6"></div>
<div class="a " style="left:1062px;top:295px;width:92px;height:20px;border:1px solid #a6a6a6;background:#fff;box-sizing:border-box"></div>
<span class="t" style="top:298px;color:#000;left:711.4px;transform:scaleX(0.852);">Leeres Anschreiben</span>
<span class="t" style="top:298px;color:#000;left:970.7px;transform:scaleX(0.918);width:79.3px;overflow:hidden;">{\rtf1\ansi\ansicpg1252</span>
<div class="a " style="left:1044px;top:297px;width:17px;height:16px;border:1px solid #7e7e7e;background:#fff;box-sizing:border-box"><svg width="15" height="14" viewBox="0 0 15 14" style="display:block"><path d="M4.6,6.6l3.2,4l3.2,-4" fill="none" stroke="#555" stroke-width="2"/></svg></div>
<div class="a " style="left:1065px;top:298px;width:86px;height:14px;border:1px solid #7a7a7a;background:#dcdcdc;box-sizing:border-box"><div style="position:absolute;left:0;right:0;top:5px;text-align:center;line-height:0;font-size:0"><span style="display:inline-block;width:2px;height:2px;background:#000;margin:0 1px"></span><span style="display:inline-block;width:2px;height:2px;background:#000;margin:0 1px"></span><span style="display:inline-block;width:2px;height:2px;background:#000;margin:0 1px"></span></div></div>
<div class="a " style="left:693px;top:315px;width:461px;height:18px;background:#f0f0f0"></div>
<div class="a " style="left:697px;top:319px;width:9px;height:9px;border:1px solid #8e8e8e;background:linear-gradient(#fff,#e4e4e4);box-sizing:border-box"><div style="position:absolute;left:1px;top:3px;width:5px;height:1px;background:#333"></div></div>
<span class="t" style="top:317px;color:#000;left:710.6px;transform:scaleX(0.856);">Gruppe : RECHNUNG</span>
<div class="a " style="left:693px;top:314px;width:16px;height:1px;background:#a6a6a6"></div>
<div class="a " style="left:693px;top:333px;width:16px;height:19px;background:#f0f0f0"></div>
<div class="a " style="left:708px;top:332px;width:256px;height:20px;border:1px solid #a6a6a6;background:#3399ff;box-sizing:border-box"></div>
<div class="a " style="left:963px;top:332px;width:100px;height:20px;border:1px solid #a6a6a6;border-left:0;background:#3399ff;box-sizing:border-box"></div>
<div class="a " style="left:966px;top:333px;width:1px;height:18px;background:#a6a6a6"></div>
<div class="a " style="left:1062px;top:332px;width:92px;height:20px;border:1px solid #a6a6a6;background:#fff;box-sizing:border-box"></div>
<div class="a " style="left:708px;top:332px;width:355px;height:20px;border:1px dotted #c87a30;box-sizing:border-box"></div>
<div class="a " style="left:1063px;top:333px;width:90px;height:18px;border:1px dotted #000;box-sizing:border-box"></div>
<span class="t" style="top:335px;color:#fff;left:711.4px;transform:scaleX(0.884);">Text für Rechnung</span>
<span class="t" style="top:335px;color:#fff;left:970.7px;transform:scaleX(0.925);width:78.7px;overflow:hidden;">{\rtf1\ansi\deff0</span>
<div class="a " style="left:1044px;top:334px;width:17px;height:16px;border:1px solid #7e7e7e;background:#fff;box-sizing:border-box"><svg width="15" height="14" viewBox="0 0 15 14" style="display:block"><path d="M4.6,6.6l3.2,4l3.2,-4" fill="none" stroke="#555" stroke-width="2"/></svg></div>
<div class="a " style="left:1065px;top:335px;width:86px;height:14px;border:1px solid #7a7a7a;background:#dcdcdc;box-sizing:border-box"><div style="position:absolute;left:0;right:0;top:5px;text-align:center;line-height:0;font-size:0"><span style="display:inline-block;width:2px;height:2px;background:#000;margin:0 1px"></span><span style="display:inline-block;width:2px;height:2px;background:#000;margin:0 1px"></span><span style="display:inline-block;width:2px;height:2px;background:#000;margin:0 1px"></span></div></div>
<div class="a " style="left:693px;top:352px;width:461px;height:18px;background:#f0f0f0"></div>
<div class="a " style="left:697px;top:356px;width:9px;height:9px;border:1px solid #8e8e8e;background:linear-gradient(#fff,#e4e4e4);box-sizing:border-box"><div style="position:absolute;left:1px;top:3px;width:5px;height:1px;background:#333"></div></div>
<span class="t" style="top:354px;color:#000;left:710.6px;transform:scaleX(0.854);">Gruppe : RECHNUNG_SCHADEN</span>
<div class="a " style="left:693px;top:351px;width:16px;height:1px;background:#a6a6a6"></div>
<div class="a " style="left:693px;top:370px;width:16px;height:19px;background:#f0f0f0"></div>
<div class="a " style="left:708px;top:369px;width:256px;height:20px;border:1px solid #a6a6a6;background:#fff;box-sizing:border-box"></div>
<div class="a " style="left:963px;top:369px;width:100px;height:20px;border:1px solid #a6a6a6;border-left:0;background:#fff;box-sizing:border-box"></div>
<div class="a " style="left:966px;top:370px;width:1px;height:18px;background:#a6a6a6"></div>
<div class="a " style="left:1062px;top:369px;width:92px;height:20px;border:1px solid #a6a6a6;background:#fff;box-sizing:border-box"></div>
<span class="t" style="top:372px;color:#000;left:711.4px;transform:scaleX(0.865);">Rechnungstext für Schäden</span>
<span class="t" style="top:372px;color:#000;left:970.7px;transform:scaleX(0.925);width:78.7px;overflow:hidden;">{\rtf1\ansi\deff0</span>
<div class="a " style="left:1044px;top:371px;width:17px;height:16px;border:1px solid #7e7e7e;background:#fff;box-sizing:border-box"><svg width="15" height="14" viewBox="0 0 15 14" style="display:block"><path d="M4.6,6.6l3.2,4l3.2,-4" fill="none" stroke="#555" stroke-width="2"/></svg></div>
<div class="a " style="left:1065px;top:372px;width:86px;height:14px;border:1px solid #7a7a7a;background:#dcdcdc;box-sizing:border-box"><div style="position:absolute;left:0;right:0;top:5px;text-align:center;line-height:0;font-size:0"><span style="display:inline-block;width:2px;height:2px;background:#000;margin:0 1px"></span><span style="display:inline-block;width:2px;height:2px;background:#000;margin:0 1px"></span><span style="display:inline-block;width:2px;height:2px;background:#000;margin:0 1px"></span></div></div>
<div class="a " style="left:693px;top:389px;width:461px;height:18px;background:#f0f0f0"></div>
<div class="a " style="left:697px;top:393px;width:9px;height:9px;border:1px solid #8e8e8e;background:linear-gradient(#fff,#e4e4e4);box-sizing:border-box"><div style="position:absolute;left:1px;top:3px;width:5px;height:1px;background:#333"></div></div>
<span class="t" style="top:391px;color:#000;left:710.6px;transform:scaleX(0.859);">Gruppe : RETEXT_OBEN</span>
<div class="a " style="left:693px;top:388px;width:16px;height:1px;background:#a6a6a6"></div>
<div class="a " style="left:693px;top:407px;width:16px;height:19px;background:#f0f0f0"></div>
<div class="a " style="left:708px;top:406px;width:256px;height:20px;border:1px solid #a6a6a6;background:#fff;box-sizing:border-box"></div>
<div class="a " style="left:963px;top:406px;width:100px;height:20px;border:1px solid #a6a6a6;border-left:0;background:#fff;box-sizing:border-box"></div>
<div class="a " style="left:966px;top:407px;width:1px;height:18px;background:#a6a6a6"></div>
<div class="a " style="left:1062px;top:406px;width:92px;height:20px;border:1px solid #a6a6a6;background:#fff;box-sizing:border-box"></div>
<span class="t" style="top:409px;color:#000;left:711.4px;transform:scaleX(0.844);">TEST</span>
<span class="t" style="top:409px;color:#000;left:970.7px;transform:scaleX(0.925);width:78.7px;overflow:hidden;">{\rtf1\ansi\deff0</span>
<div class="a " style="left:1044px;top:408px;width:17px;height:16px;border:1px solid #7e7e7e;background:#fff;box-sizing:border-box"><svg width="15" height="14" viewBox="0 0 15 14" style="display:block"><path d="M4.6,6.6l3.2,4l3.2,-4" fill="none" stroke="#555" stroke-width="2"/></svg></div>
<div class="a " style="left:1065px;top:409px;width:86px;height:14px;border:1px solid #7a7a7a;background:#dcdcdc;box-sizing:border-box"><div style="position:absolute;left:0;right:0;top:5px;text-align:center;line-height:0;font-size:0"><span style="display:inline-block;width:2px;height:2px;background:#000;margin:0 1px"></span><span style="display:inline-block;width:2px;height:2px;background:#000;margin:0 1px"></span><span style="display:inline-block;width:2px;height:2px;background:#000;margin:0 1px"></span></div></div>
<div class="a " style="left:693px;top:426px;width:461px;height:18px;background:#f0f0f0"></div>
<div class="a " style="left:697px;top:430px;width:9px;height:9px;border:1px solid #8e8e8e;background:linear-gradient(#fff,#e4e4e4);box-sizing:border-box"><div style="position:absolute;left:1px;top:3px;width:5px;height:1px;background:#333"></div></div>
<span class="t" style="top:428px;color:#000;left:710.6px;transform:scaleX(0.849);">Gruppe : SCHAEDEN</span>
<div class="a " style="left:693px;top:425px;width:16px;height:1px;background:#a6a6a6"></div>
<div class="a " style="left:693px;top:444px;width:16px;height:19px;background:#f0f0f0"></div>
<div class="a " style="left:708px;top:443px;width:256px;height:20px;border:1px solid #a6a6a6;background:#fff;box-sizing:border-box"></div>
<div class="a " style="left:963px;top:443px;width:100px;height:20px;border:1px solid #a6a6a6;border-left:0;background:#fff;box-sizing:border-box"></div>
<div class="a " style="left:966px;top:444px;width:1px;height:18px;background:#a6a6a6"></div>
<div class="a " style="left:1062px;top:443px;width:92px;height:20px;border:1px solid #a6a6a6;background:#fff;box-sizing:border-box"></div>
<span class="t" style="top:446px;color:#000;left:711.4px;transform:scaleX(0.880);">Text für Schäden</span>
<span class="t" style="top:446px;color:#000;left:970.7px;transform:scaleX(0.925);width:78.7px;overflow:hidden;">{\rtf1\ansi\deff0</span>
<div class="a " style="left:1044px;top:445px;width:17px;height:16px;border:1px solid #7e7e7e;background:#fff;box-sizing:border-box"><svg width="15" height="14" viewBox="0 0 15 14" style="display:block"><path d="M4.6,6.6l3.2,4l3.2,-4" fill="none" stroke="#555" stroke-width="2"/></svg></div>
<div class="a " style="left:1065px;top:446px;width:86px;height:14px;border:1px solid #7a7a7a;background:#dcdcdc;box-sizing:border-box"><div style="position:absolute;left:0;right:0;top:5px;text-align:center;line-height:0;font-size:0"><span style="display:inline-block;width:2px;height:2px;background:#000;margin:0 1px"></span><span style="display:inline-block;width:2px;height:2px;background:#000;margin:0 1px"></span><span style="display:inline-block;width:2px;height:2px;background:#000;margin:0 1px"></span></div></div>
<div class="a " style="left:693px;top:462px;width:16px;height:1px;background:#a6a6a6"></div>
<svg class="a" style="left:0;top:300px" width="760" height="70" viewBox="0 300 760 70"><rect x="16.5" y="327.5" width="441" height="18" fill="none" stroke="#e5161d" stroke-width="3"/><path d="M463.5,336.5L584.3,322.2V329H705.8V343.6H584.3V350.6Z" fill="none" stroke="#e5161d" stroke-width="2.8" stroke-linejoin="miter"/></svg>
<div class="a " style="left:897px;top:682px;width:17px;height:1px;background:#5d7aa3"></div>
<div class="a " style="left:958px;top:682px;width:11px;height:1px;background:#5d7aa3"></div>
</div>
</body></html>
